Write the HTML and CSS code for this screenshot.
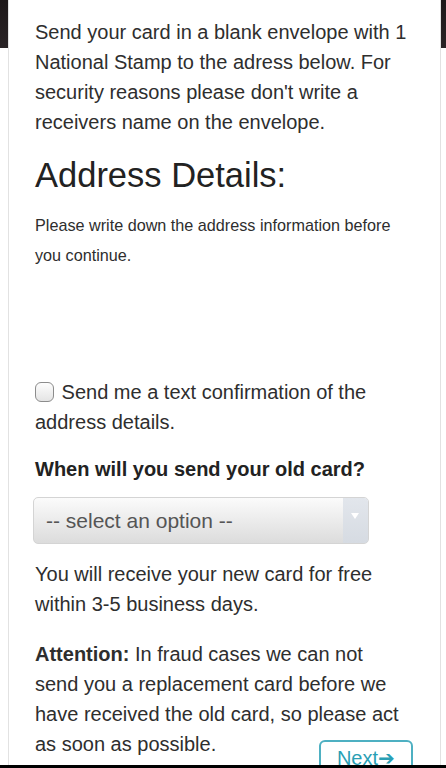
FILE: index.html
```html
<!DOCTYPE html>
<html lang="en">
<head>
    <meta charset="UTF-8">
    <meta name="viewport" content="width=device-width, initial-scale=1.0">
    <title>Replace card</title>
    <link rel="stylesheet" href="styles.css">
</head>
<body>

    <div class="card">
        <p class="lead">Send your card in a blank envelope with 1 National Stamp to the adress below. For security reasons please don't write a receivers name on the envelope.</p>

        <h1>Address Details:</h1>
        <p class="note">Please write down the address information before you continue.</p>

        <div class="address-box"></div>

        <label class="confirm">
            <input type="checkbox" id="textConfirm">
            Send me a text confirmation of the address details.
        </label>

        <h3>When will you send your old card?</h3>
        <div class="select-wrap">
            <select id="sendWhen">
                <option>-- select an option --</option>
                <option>Today</option>
                <option>Tomorrow</option>
                <option>Later this week</option>
            </select>
            <span class="select-arrow"></span>
        </div>

        <p class="info">You will receive your new card for free within 3-5 business days.</p>

        <p class="info"><b>Attention:</b> In fraud cases we can not send you a replacement card before we have received the old card, so please act as soon as possible.<button class="next-btn">Next&#x2794;</button></p>
    </div>

    <div class="home-bar"></div>

</body>
</html>
```

FILE: styles.css
```css
body {
    font-family: "Liberation Sans", Arial, sans-serif;
    margin: 0;
    padding: 0;
    color: #2e2e2e;
    background: linear-gradient(#1d1819 0, #2a2426 48px, #fff 48px);
}

.card {
    margin: 0 5px 0 8px;
    padding: 6px 31px 40px 26px;
    background: #fff;
    border-left: 1px solid #e2e2e2;
    border-right: 1px solid #e2e2e2;
}

.lead {
    font-size: 20px;
    line-height: 30px;
    margin: 11px 0 15px;
}

h1 {
    font-size: 34.5px;
    font-weight: normal;
    color: #222;
    margin: 0 0 12px;
    line-height: 46px;
}

.note {
    font-size: 16.2px;
    line-height: 30px;
    margin: 0;
}

.address-box {
    height: 107px;
}

.confirm {
    display: block;
    font-size: 20px;
    line-height: 30px;
}

.confirm input {
    appearance: none;
    width: 19px;
    height: 20px;
    margin: 0 2px 0 0;
    vertical-align: -3px;
    border: 1px solid #8c8c8c;
    border-radius: 6px;
    background: linear-gradient(#fdfdfd, #e4e4e4);
}

h3 {
    font-size: 20px;
    font-weight: bold;
    color: #222;
    margin: 17px 0 13px;
    line-height: 30px;
}

.select-wrap {
    position: relative;
    width: 336px;
    margin-left: -2px;
}

.select-wrap select {
    appearance: none;
    width: 100%;
    height: 47px;
    padding: 0 12px;
    font-family: "Liberation Sans", Arial, sans-serif;
    font-size: 21px;
    color: #555;
    border: 1px solid #d4d4d4;
    border-radius: 5px;
    background: linear-gradient(#fbfbfb, #dcdcdc);
}

.select-arrow {
    position: absolute;
    top: 1px;
    right: 1px;
    bottom: 1px;
    width: 25px;
    border-radius: 0 4px 4px 0;
    background: linear-gradient(#e2e6ec, #d6dbe2);
}

.select-arrow::after {
    content: "";
    position: absolute;
    top: 15px;
    left: 8px;
    border-left: 4px solid transparent;
    border-right: 4px solid transparent;
    border-top: 6px solid #fff;
}

.info {
    font-size: 20px;
    line-height: 30px;
    margin: 15px 0 20px;
}

.next-btn {
    float: right;
    margin: 11px -4px 0 0;
    padding: 4px 16px;
    font-family: "Liberation Sans", Arial, sans-serif;
    font-size: 20px;
    color: #2a9fb5;
    background: #fff;
    border: 2px solid #4eb0c2;
    border-radius: 6px;
}

.home-bar {
    position: fixed;
    left: 0;
    right: 0;
    bottom: 0;
    height: 3px;
    background: #000;
}
```
